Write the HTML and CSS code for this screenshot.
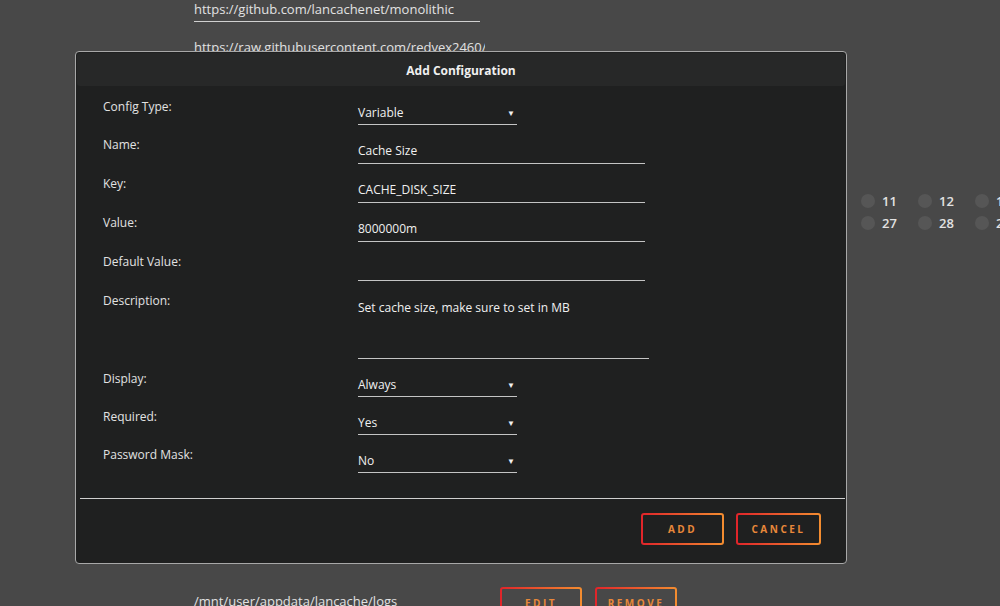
FILE: index.html
```html
<!DOCTYPE html>
<html lang="en">
<head>
  <meta charset="UTF-8">
  <title>Add Configuration</title>
  <link rel="stylesheet" href="styles.css">
</head>
<body>
  <div class="page">
    <div class="link first">https://github.com/lancachenet/monolithic</div>
    <div class="link second">https://raw.githubusercontent.com/redvex2460/docker-templates</div>

    <div class="dots">
      <div class="dot"><span class="circle"></span>11</div>
      <div class="dot"><span class="circle"></span>12</div>
      <div class="dot"><span class="circle"></span>13</div>
      <div class="dot"><span class="circle"></span>27</div>
      <div class="dot"><span class="circle"></span>28</div>
      <div class="dot"><span class="circle"></span>29</div>
    </div>

    <div class="path-row">
      <div class="path">/mnt/user/appdata/lancache/logs</div>
      <button class="btn">EDIT</button>
      <button class="btn">REMOVE</button>
    </div>
  </div>

  <div class="modal">
    <div class="modal-header">Add Configuration</div>
    <div class="form">
      <div class="row">
        <div class="label">Config Type:</div>
        <div class="field select">Variable<span class="caret">&#9660;</span></div>
      </div>
      <div class="row">
        <div class="label">Name:</div>
        <div class="field text">Cache Size</div>
      </div>
      <div class="row">
        <div class="label">Key:</div>
        <div class="field text">CACHE_DISK_SIZE</div>
      </div>
      <div class="row">
        <div class="label">Value:</div>
        <div class="field text">8000000m</div>
      </div>
      <div class="row">
        <div class="label">Default Value:</div>
        <div class="field text"></div>
      </div>
      <div class="row">
        <div class="label">Description:</div>
        <div class="field area">Set cache size, make sure to set in MB</div>
      </div>
      <div class="row">
        <div class="label">Display:</div>
        <div class="field select">Always<span class="caret">&#9660;</span></div>
      </div>
      <div class="row">
        <div class="label">Required:</div>
        <div class="field select">Yes<span class="caret">&#9660;</span></div>
      </div>
      <div class="row">
        <div class="label">Password Mask:</div>
        <div class="field select">No<span class="caret">&#9660;</span></div>
      </div>
    </div>
    <div class="divider"></div>
    <div class="actions">
      <button class="btn add">ADD</button>
      <button class="btn cancel">CANCEL</button>
    </div>
  </div>
</body>
</html>
```

FILE: styles.css
```css
body {
  margin: 0;
  height: 606px;
  overflow: hidden;
  background-color: #484848;
  color: #e2e2e2;
  font-family: "Open Sans", "Noto Sans", sans-serif;
  font-size: 12px;
}
.page {
  padding-left: 194px;
}
.link {
  width: 286px;
  font-size: 13px;
  line-height: 16px;
  white-space: nowrap;
  overflow: hidden;
  padding-bottom: 4px;
  border-bottom: 1px solid #d0d0d0;
}
.link.first {
  margin-top: 1px;
}
.link.second {
  width: 291px;
  margin-top: 17px;
}
.dots {
  margin: 130px 0 0 667px;
  display: grid;
  grid-template-columns: repeat(3, 57px);
  grid-auto-rows: 22px;
  font-size: 13px;
  font-weight: 600;
}
.dot {
  display: flex;
  align-items: center;
  gap: 7px;
}
.circle {
  width: 14px;
  height: 14px;
  border-radius: 50%;
  background-color: #565656;
}
.path-row {
  margin-top: 353px;
  display: flex;
  align-items: flex-start;
  gap: 13px;
}
.path {
  width: 293px;
  margin-top: 6px;
  font-size: 13px;
  line-height: 16px;
}
.btn {
  height: 32px;
  padding: 0;
  border: 2px solid transparent;
  border-radius: 3px;
  background: linear-gradient(#484848, #484848) padding-box,
              linear-gradient(90deg, #e0242a, #f38d30) border-box;
  color: #e8883a;
  font-family: inherit;
  font-size: 10px;
  font-weight: 700;
  letter-spacing: 2.5px;
  width: 82px;
}
.modal {
  position: fixed;
  left: 75px;
  top: 51px;
  width: 768px;
  height: 509px;
  padding: 1px;
  border: 1px solid #a8a8a8;
  border-radius: 4px;
  background-color: #1f2020;
}
.modal-header {
  height: 33px;
  line-height: 35px;
  border-radius: 3px;
  background-color: #272828;
  text-align: center;
  font-weight: 700;
  color: #f0f0f0;
}
.form {
  padding: 13px 0 0 26px;
  display: grid;
  row-gap: 12px;
}
.row {
  display: grid;
  grid-template-columns: 255px 1fr;
  align-items: start;
}
.label {
  line-height: 16px;
}
.field {
  margin-top: 6px;
  line-height: 16px;
  padding-bottom: 4px;
  border-bottom: 1px solid #c4c4c4;
  color: #f0f0f0;
}
.field.text {
  width: 287px;
  height: 16px;
}
.field.area {
  width: 291px;
  height: 54px;
  padding-top: 1px;
  padding-bottom: 4px;
}
.field.select {
  width: 159px;
  height: 16px;
  padding-bottom: 3px;
  display: flex;
  justify-content: space-between;
}
.caret {
  font-size: 8px;
  padding-right: 2px;
}
.divider {
  margin: 25px 0 0 3px;
  border-top: 1px solid #cfcfcf;
}
.actions {
  margin-top: 14px;
  padding-right: 24px;
  display: flex;
  justify-content: flex-end;
  gap: 12px;
}
.actions .btn {
  background: linear-gradient(#1f2020, #1f2020) padding-box,
              linear-gradient(90deg, #e0242a, #f38d30) border-box;
}
.btn.add {
  width: 83px;
}
.btn.cancel {
  width: 85px;
}
```
